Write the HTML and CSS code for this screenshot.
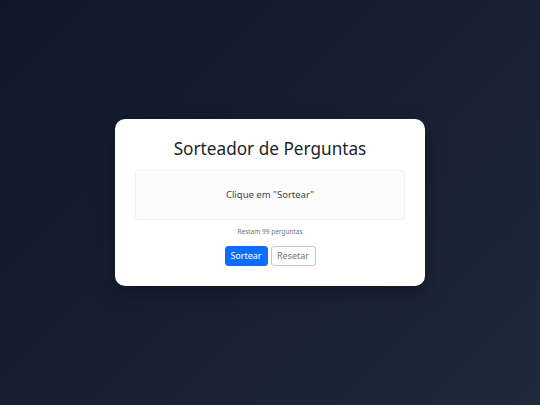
FILE: index.html
```html
<!DOCTYPE html>
<html lang="pt-BR">
<head>
<meta charset="utf-8">
<title>Sorteador de Perguntas</title>
<link rel="stylesheet" href="styles.css">
</head>
<body>
<main class="page">
  <section class="card">
    <h1 class="title">Sorteador de Perguntas</h1>
    <div class="question">Clique em "Sortear"</div>
    <p class="remaining">Restam 99 perguntas</p>
    <div class="actions">
      <button class="btn btn-primary" type="button">Sortear</button>
      <button class="btn btn-outline" type="button">Resetar</button>
    </div>
  </section>
</main>
</body>
</html>
```

FILE: styles.css
```css
* { box-sizing: border-box; }
html, body { margin: 0; height: 100%; }
body {
  font-family: "Noto Sans", "Open Sans", sans-serif;
  background: linear-gradient(135deg, #10172a 0%, #1e293b 100%);
  color: #212529;
}
.page {
  height: 100%;
  display: flex;
  align-items: center;
  justify-content: center;
}
.card {
  width: 310px;
  background: #fff;
  border-radius: 10px;
  padding: 20px;
  box-shadow: 0 6px 20px rgba(0,0,0,0.35);
  display: flex;
  flex-direction: column;
  align-items: stretch;
  text-align: center;
}
.title {
  margin: 0 0 11px;
  font-size: 17.2px;
  font-weight: 400;
  line-height: 20px;
  color: #212529;
}
.question {
  height: 50px;
  display: flex;
  align-items: center;
  justify-content: center;
  background: #fcfcfd;
  border: 1px solid #eef0f2;
  border-radius: 3px;
  font-size: 9.5px;
  line-height: 12px;
  padding-bottom: 1px;
  color: #3d4349;
}
.remaining {
  margin: 7px 0 0;
  font-size: 6.5px;
  line-height: 10px;
  color: #6c757d;
}
.actions {
  margin-top: 9px;
  display: flex;
  justify-content: center;
  gap: 3px;
}
.btn {
  font-family: inherit;
  font-size: 9px;
  line-height: 12px;
  height: 20px;
  padding: 0 4px;
  border-radius: 3px;
  cursor: pointer;
}
.btn-primary {
  background: #0d6efd;
  border: 1px solid #0d6efd;
  color: #fff;
  width: 43px;
}
.btn-outline {
  background: #fff;
  border: 1px solid #c4c8cc;
  color: #6c757d;
  width: 45px;
}
```
